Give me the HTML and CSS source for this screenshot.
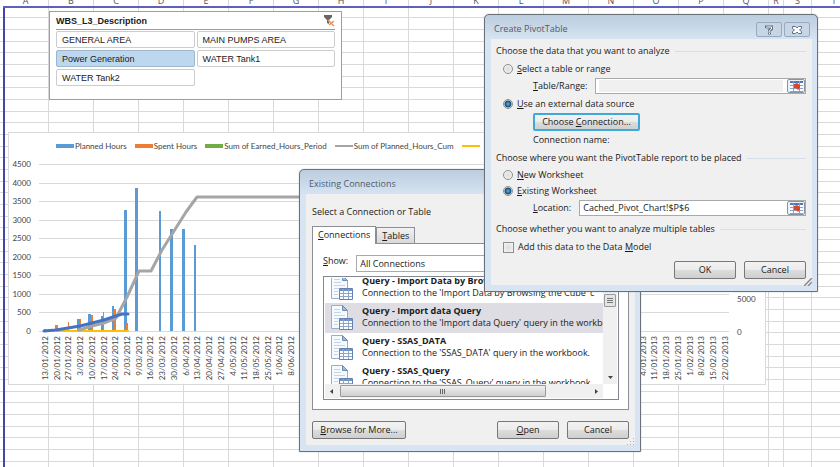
FILE: index.html
```html
<!DOCTYPE html>
<html lang="en">
<head>
    <meta charset="UTF-8">
    <meta name="viewport" content="width=device-width, initial-scale=1">
    <title>Create PivotTable</title>
    <link rel="stylesheet" href="styles.css">
</head>
<body>

    <svg class="symbols" aria-hidden="true">
        <symbol id="icon-query" viewBox="0 0 23 26">
            <path d="M1.500 .5h11l5 5v18h-16z" fill="#f6f9fd" stroke="#9aaec8"/>
            <path d="M12.500 .5v5h5z" fill="#9dbade" stroke="#6f8db5"/>
            <path d="M4 4.500h6M4 7.500h7M4 10.500h11M4 13.500h5M4 16.500h4M4 19.500h4" stroke="#c3d3e8"/>
            <path d="M9.500 13.500h13v11h-13z" fill="#fff" stroke="#6482ad"/>
            <path d="M10 14h12v2h-12z" fill="#6d93c8"/>
            <path d="M10 18.500h12M10 21.500h12M13.500 14v10M18.500 14v10" stroke="#8aa6cc"/>
        </symbol>
        <symbol id="icon-range" viewBox="0 0 13 11">
            <path d="M0 0h13v11h-13z" fill="#fff"/>
            <path d="M0 0h13v2h-13z" fill="#4f78b4"/>
            <path d="M0 4.500h13M0 7.500h13M0 10.500h13M3.500 0v11M9.500 0v11" stroke="#7fa3d3"/>
            <path d="M4 3l3-1 3 2v3l-2 2-2-2h-2z" fill="#d9472b"/>
        </symbol>
    </svg>

    <main class="sheet">
        <div class="col">A</div>
        <div class="col">B</div>
        <div class="col">C</div>
        <div class="col">D</div>
        <div class="col">E</div>
        <div class="col">F</div>
        <div class="col">G</div>
        <div class="col">H</div>
        <div class="col">I</div>
        <div class="col">J</div>
        <div class="col">K</div>
        <div class="col">L</div>
        <div class="col">M</div>
        <div class="col">N</div>
        <div class="col">O</div>
        <div class="col">P</div>
        <div class="col">Q</div>
        <div class="col col-r">R</div>
        <div class="col col-s">S</div>
        <div class="col col-last">T</div>
    </main>

    <section class="slicer">
        <header class="slicer-head">
            <h2>WBS_L3_Description</h2>
            <button class="clear-filter" type="button" aria-label="Clear filter">
                <svg width="12" height="12" viewBox="0 0 12 12">
                    <path d="M1 0h8v2l-3 3v4l-2-1v-3l-3-3z" fill="#666"/>
                    <path d="M5 5l6 6M11 6l-5 4" stroke="#e8935a" stroke-width="1.500"/>
                </svg>
            </button>
        </header>
        <div class="slicer-items">
            <button type="button">GENERAL AREA</button>
            <button type="button">MAIN PUMPS AREA</button>
            <button type="button" class="selected">Power Generation</button>
            <button type="button">WATER Tank1</button>
            <button type="button">WATER Tank2</button>
        </div>
    </section>

    <section class="chart">
        <div class="legend">
            <span><i class="key key-planned"></i>Planned Hours</span>
            <span><i class="key key-spent"></i>Spent Hours</span>
            <span><i class="key key-earned"></i>Sum of Earned_Hours_Period</span>
            <span><i class="key key-cum"></i>Sum of Planned_Hours_Cum</span>
            <span><i class="key key-yellow"></i></span>
        </div>
        <svg class="plot" width="756" height="230" viewBox="9 154 756 230">
            <g id="grid" class="grid"></g>
            <g id="value-labels" text-anchor="end"></g>
            <g class="planned">
                <path d="M77 319h3v12h-3zM88 314h3v17h-3zM101 316h2v15h-2zM112 306h2v25h-2z"/>
                <path d="M124 210h3v121h-3zM135 188h3v143h-3zM159 211h2v120h-2zM170 229h3v102h-3zM182 229h3v102h-3zM194 245h2v86h-2z"/>
            </g>
            <path class="spent" d="M44 329h2v2h-2zM55 325h3v6h-3zM68 322h1v9h-1zM80 319h1v12h-1zM91 315h2v16h-2zM103 312h1v19h-1zM114 309h2v22h-2zM126 323h2v8h-2z"/>
            <polyline class="line yellow" points="57,331 128,331"/>
            <polyline class="line cum" points="79,330 92,326 104,323 116,318 127,297 139,271 151,271 162,250 174,231 186,212 197,197 729,197"/>
            <polyline class="line actual" points="44,331 56,330 68,328 80,326 92,323 104,320 116,316 122,314 128,314"/>
            <g id="date-labels" text-anchor="end"></g>
            <text x="737" y="302">5000</text>
            <text x="737" y="335">0</text>
        </svg>
    </section>

    <section class="dialog connections" aria-label="Existing Connections">
        <header class="titlebar"><h2>Existing Connections</h2></header>
        <form class="dialog-body">
            <p class="prompt">Select a Connection or Table</p>
            <div class="tabs">
                <button type="button" class="tab active"><u>C</u>onnections</button>
                <button type="button" class="tab"><u>T</u>ables</button>
            </div>
            <div class="panel">
                <div class="show-row">
                    <label for="show"><u>S</u>how:</label>
                    <select id="show"><option>All Connections</option></select>
                </div>
                <div class="listbox">
                    <ul class="queries">
                        <li>
                            <svg><use href="#icon-query"/></svg>
                            <div><b>Query - Import Data by Browsing</b><span>Connection to the 'Import Data by Browsing the Cube' c</span></div>
                        </li>
                        <li class="selected">
                            <svg><use href="#icon-query"/></svg>
                            <div><b>Query - Import data Query</b><span>Connection to the 'Import data Query' query in the workbook.</span></div>
                        </li>
                        <li>
                            <svg><use href="#icon-query"/></svg>
                            <div><b>Query - SSAS_DATA</b><span>Connection to the 'SSAS_DATA' query in the workbook.</span></div>
                        </li>
                        <li>
                            <svg><use href="#icon-query"/></svg>
                            <div><b>Query - SSAS_Query</b><span>Connection to the 'SSAS_Query' query in the workbook.</span></div>
                        </li>
                    </ul>
                    <div class="vbar">
                        <div class="vthumb"></div>
                        <svg width="5" height="3" viewBox="0 0 5 3"><path d="M0 0h5l-2.500 3z"/></svg>
                    </div>
                    <div class="hbar">
                        <svg width="3" height="5" viewBox="0 0 3 5"><path d="M3 0v5l-3-2.500z"/></svg>
                        <div class="hthumb"></div>
                        <svg width="3" height="5" viewBox="0 0 3 5"><path d="M0 0v5l3-2.500z"/></svg>
                    </div>
                </div>
            </div>
            <div class="actions">
                <button type="button" class="btn browse"><u>B</u>rowse for More...</button>
                <button type="button" class="btn"><u>O</u>pen</button>
                <button type="button" class="btn">Cancel</button>
            </div>
        </form>
        <svg class="grip" width="8" height="8" viewBox="0 0 8 8"><path d="M6 0h1v1h-1zM6 3h1v1h-1zM6 6h1v1h-1zM3 3h1v1h-1zM3 6h1v1h-1zM0 6h1v1h-1z" fill="#b0b0b0"/></svg>
    </section>

    <section class="dialog pivot" aria-label="Create PivotTable">
        <header class="titlebar">
            <h2>Create PivotTable</h2>
            <button type="button" class="caption" aria-label="Help">
                <svg width="8" height="10" viewBox="0 0 8 10"><path d="M1 3v-1h5.500v2l-2 1.500v1M4.500 7.500v2" fill="none" stroke="#66717f" stroke-width="3"/><path d="M1.500 2.500v-.5h5v2l-2 1.500v1M4.500 8v1" fill="none" stroke="#fff"/></svg>
            </button>
            <button type="button" class="caption" aria-label="Close">
                <svg width="10" height="8" viewBox="0 0 10 8"><path d="M.5 .5h3l1.500 1.500 1.500-1.500h3v2l-2 1.500 2 1.500v2h-3l-1.500-1.500-1.500 1.500h-3v-2l2-1.500-2-1.500z" fill="#fff" stroke="#66717f"/></svg>
            </button>
        </header>
        <form class="dialog-body">
            <fieldset>
                <legend>Choose the data that you want to analyze</legend>
                <label class="choice"><input type="radio" name="source"><span><u>S</u>elect a table or range</span></label>
                <div class="field indent">
                    <label for="range"><u>T</u>able/Range:</label>
                    <div class="ref disabled">
                        <input id="range" type="text" disabled>
                        <button type="button" aria-label="Pick table range"><svg width="13" height="11"><use href="#icon-range"/></svg></button>
                    </div>
                </div>
                <label class="choice"><input type="radio" name="source" checked><span><u>U</u>se an external data source</span></label>
                <div class="indent"><button type="button" class="btn choose">Choose <u>C</u>onnection...</button></div>
                <p class="indent conn-name">Connection name:</p>
            </fieldset>
            <fieldset>
                <legend>Choose where you want the PivotTable report to be placed</legend>
                <label class="choice short"><input type="radio" name="target"><span><u>N</u>ew Worksheet</span></label>
                <label class="choice short"><input type="radio" name="target" checked><span><u>E</u>xisting Worksheet</span></label>
                <div class="field indent">
                    <label for="location"><u>L</u>ocation:</label>
                    <div class="ref">
                        <input id="location" type="text" value="Cached_Pivot_Chart!$P$6">
                        <button type="button" aria-label="Pick location"><svg width="13" height="11"><use href="#icon-range"/></svg></button>
                    </div>
                </div>
            </fieldset>
            <fieldset>
                <legend>Choose whether you want to analyze multiple tables</legend>
                <label class="choice"><input type="checkbox"><span>Add this data to the Data <u>M</u>odel</span></label>
            </fieldset>
            <div class="actions">
                <button type="button" class="btn">OK</button>
                <button type="button" class="btn">Cancel</button>
            </div>
        </form>
        <svg class="grip" width="8" height="8" viewBox="0 0 8 8"><path d="M0 8l8-8M4 8l4-4" stroke="#8a8a8a" stroke-width="1.500"/></svg>
    </section>

    <script>
        const svgNS = 'http://www.w3.org/2000/svg';
        const add = (parent, tag, attrs, text) => {
            const el = document.createElementNS(svgNS, tag);
            for (const key in attrs) el.setAttribute(key, attrs[key]);
            if (text !== undefined) el.textContent = text;
            document.getElementById(parent).appendChild(el);
        };

        // value axis, 0 - 4500
        for (let v = 0; v <= 4500; v += 500) {
            const y = Math.round(331 - v * 167 / 4500);
            add('grid', 'path', {d: `M39 ${y + 0.5}H729`});
            add('value-labels', 'text', {x: 31, y: y + 3}, v);
        }

        // one label a week
        for (let i = 0; i < 59; i++) {
            const d = new Date(2012, 0, 13 + i * 7);
            const label = `${d.getDate()}/${String(d.getMonth() + 1).padStart(2, '0')}/${d.getFullYear()}`;
            const x = Math.round(48 + i * 11.72);
            add('date-labels', 'text', {transform: `translate(${x} 336) rotate(-90)`}, label);
        }
    </script>
</body>
</html>
```
FILE: styles.css
```css
* {
    box-sizing: border-box;
}
body {
    margin: 0;
    min-height: 100vh;
    position: relative;
    overflow: hidden;
    background: #fff;
    color: #1a1a1a;
    font: 9px/12px "Open Sans", "Noto Sans", sans-serif;
}
h2, p, ul, fieldset, legend {
    margin: 0;
    padding: 0;
    border: 0;
}
button, input, select {
    font: inherit;
    color: inherit;
    margin: 0;
    padding: 0;
}
.symbols {
    position: absolute;
    width: 0;
    height: 0;
}

/* worksheet */
.sheet {
    display: flex;
    height: 100vh;
    padding-left: 3px;
    overflow: hidden;
    background: repeating-linear-gradient(#d9d9d9 0 1px, transparent 1px 12px, #d9d9d9 12px 13px, transparent 13px 24px, #d9d9d9 24px 25px, transparent 25px 35px) 0 17px no-repeat;
}
.col {
    flex: 0 0 45px;
    border-right: 1px solid #d9d9d9;
    color: #555;
    text-align: center;
    line-height: 6px;
    height: 100%;
}
.col::before {
    content: "";
    display: block;
    height: 2px;
    margin-top: -4px;
}
.col::after {
    content: "";
    display: block;
    margin: 2px -1px 0 0;
    height: 2px;
    background: #5f60bd;
}
.col:first-child {
    flex-basis: 46px;
    background: linear-gradient(#4646a8, #4646a8) 0 6px / 2px 100% no-repeat;
}
.col-r {
    flex-basis: 15px;
}
.col-s {
    flex-basis: 28px;
}
.col-last {
    flex: 1 0 45px;
}

/* slicer */
.slicer {
    position: absolute;
    left: 49px;
    top: 11px;
    width: 293px;
    padding: 0 6px 13px 6px;
    border: 1px solid #6fa8dc;
    background: #fff;
    font: 9px/12px "Liberation Sans", sans-serif;
}
.slicer-head {
    display: flex;
    justify-content: space-between;
    align-items: center;
    height: 18px;
    border-bottom: 1px solid #6fa8dc;
}
.slicer-head h2 {
    font-size: 9px;
}
.clear-filter {
    border: 0;
    background: none;
    height: 12px;
    line-height: 0;
}
.slicer-items {
    display: grid;
    grid-template-columns: 1fr 1fr;
    gap: 2px;
    margin-top: 1px;
}
.slicer-items button {
    height: 17px;
    padding: 0 5px;
    text-align: left;
    background: #fff;
    border: 1px solid #ccc;
    border-radius: 2px;
}
.slicer-items .selected {
    background: #bdd7ee;
    border-color: #9eb6ca;
}

/* chart */
.chart {
    position: absolute;
    left: 8px;
    top: 132px;
    width: 758px;
    border: 1px solid #d9d9d9;
    background: #fff;
    color: #444;
    font-family: Lato, sans-serif;
    font-size: 8px;
}
.legend {
    display: flex;
    gap: 8px;
    padding: 7px 0 2px 47px;
}
.legend span {
    display: flex;
    align-items: center;
    gap: 1px;
}
.key {
    width: 18px;
    height: 4px;
}
.key-planned {
    background: #5b9bd5;
}
.key-spent {
    background: #ed7d31;
}
.key-earned {
    background: #70ad47;
}
.key-cum {
    height: 2px;
    background: #a5a5a5;
}
.key-yellow {
    height: 2px;
    background: #ffc000;
}
.plot {
    display: block;
}
.plot text {
    fill: #444;
}
.grid {
    stroke: #d9d9d9;
}
.planned {
    fill: #5b9bd5;
}
.spent {
    fill: #ed7d31;
}
.line {
    fill: none;
    stroke-width: 2;
    stroke-linejoin: round;
    stroke-linecap: round;
}
.line.yellow {
    stroke: #ffc000;
}
.line.cum {
    stroke: #a5a5a5;
    stroke-width: 3;
}
.line.actual {
    stroke: #4472c4;
    stroke-width: 3;
}

/* dialogs */
.dialog {
    position: absolute;
    padding: 0 5px 6px 6px;
    border: 1px solid #6b7178;
    border-radius: 5px 5px 0 0;
    background: linear-gradient(#bccddf, #d7e4f2 25px);
    box-shadow: 0 0 1px #777;
}
.dialog-body {
    background: #f0f0f0;
}
.titlebar {
    display: flex;
    gap: 2px;
    height: 24px;
    padding: 0 2px 0 3px;
    color: #4d5a6b;
}
.titlebar h2 {
    flex: 1;
    align-self: center;
    padding-top: 4px;
    font-size: 9px;
    font-weight: normal;
}
.caption {
    display: flex;
    align-items: center;
    justify-content: center;
    width: 26px;
    height: 15px;
    margin-top: 7px;
    background: #c6d6e7;
    border: 1px solid #9aa9bc;
    border-radius: 2px;
}
.btn {
    width: 62px;
    height: 18px;
    border: 1px solid #777;
    border-radius: 2px;
    background: linear-gradient(#f3f3f3, #ebebeb 50%, #ddd 50%, #cfcfcf);
}
.actions {
    display: flex;
    justify-content: flex-end;
    gap: 8px;
}

/* existing connections */
.connections {
    left: 299px;
    top: 169px;
    width: 342px;
}
.connections .dialog-body {
    padding: 12px 6px 6px;
}
.tabs {
    display: flex;
    align-items: flex-end;
    margin-top: 8px;
}
.tab {
    height: 16px;
    padding: 0 5px;
    border: 1px solid #8c8f96;
    border-bottom: 0;
    background: linear-gradient(#f2f2f2, #d8d8d8);
}
.tab.active {
    height: 18px;
    margin-bottom: -1px;
    padding-bottom: 1px;
    position: relative;
    background: #fff;
}
.panel {
    padding: 11px 9px 9px 10px;
    border: 1px solid #8c8f96;
    background: #fff;
}
.show-row {
    display: flex;
    gap: 8px;
}
.show-row select {
    flex: 1;
    height: 17px;
    padding-left: 3px;
    appearance: none;
    border: 1px solid #aaa;
    border-radius: 0;
    background: #fff;
}
.listbox {
    display: grid;
    grid-template-columns: 1fr 14px;
    margin-top: 4px;
    padding: 1px;
    border: 1px solid #828790;
}
.queries {
    display: flex;
    flex-direction: column;
    justify-content: flex-end;
    height: 106px;
    overflow: hidden;
    list-style: none;
}
.queries li {
    display: flex;
    flex: none;
    gap: 9px;
    height: 30px;
    padding: 2px 0 0 5px;
}
.queries li:last-child {
    height: 21px;
}
.queries .selected {
    background: #dedde3;
}
.queries svg {
    flex: none;
    width: 23px;
    height: 26px;
}
.queries div {
    white-space: nowrap;
}
.queries b, .queries span {
    display: block;
    font-size: 9px;
}
.vbar {
    display: flex;
    flex-direction: column;
    justify-content: space-between;
    align-items: center;
    padding: 16px 0 5px;
    background: #f0f0f0;
}
.vbar svg, .hbar svg {
    fill: #444;
}
.vthumb {
    width: 12px;
    height: 13px;
    border: 1px solid #999;
    border-radius: 1px;
    background: repeating-linear-gradient(#777 0 1px, transparent 1px 2px) center / 6px 5px no-repeat, #e4e4e4;
}
.hbar {
    display: flex;
    align-items: center;
    gap: 7px;
    height: 14px;
    padding: 0 5px;
    background: #f0f0f0;
}
.hthumb {
    width: 206px;
    height: 12px;
    margin-right: auto;
    border: 1px solid #999;
    border-radius: 1px;
    background: repeating-linear-gradient(90deg, #666 0 1px, transparent 1px 2px) center / 6px 5px no-repeat, linear-gradient(#f0f0f0, #cfcfcf);
}
.connections .actions {
    margin-top: 11px;
}
.browse {
    width: 94px;
    margin-right: auto;
}

/* create pivottable */
.pivot {
    left: 484px;
    top: 14px;
    width: 334px;
}
.pivot .dialog-body {
    padding: 6px 6px 6px 5px;
}
.pivot legend {
    display: flex;
    align-items: center;
    gap: 5px;
    width: 100%;
    margin-bottom: 3px;
}
.pivot legend::after {
    content: "";
    flex: 1;
    height: 1px;
    background: #d3e0ec;
}
.choice {
    display: flex;
    align-items: center;
    gap: 4px;
    height: 18px;
    padding-left: 7px;
}
.choice.short {
    height: 16px;
}
.choice input {
    appearance: none;
    width: 11px;
    height: 11px;
    border: 1px solid #8e8f8f;
    background: radial-gradient(#ddd, #f6f6f6);
}
.choice input[type=radio] {
    width: 10px;
    height: 10px;
    border-radius: 50%;
}
.choice input[type=radio]:checked {
    background: radial-gradient(circle, #58b6e8 0, #1c4a74 3px, #f4f4f4 4px);
}
.indent {
    margin-left: 37px;
}
.field {
    display: flex;
    align-items: center;
    gap: 8px;
}
.ref {
    display: flex;
    flex: 1;
    height: 16px;
    border: 1px solid #aaa;
    background: #fff;
}
.ref input {
    flex: 1;
    min-width: 0;
    margin: 1px 4px 1px 3px;
    border: 0;
    background: none;
}
.ref.disabled input {
    background: #f0f0f0;
}
.ref button {
    display: flex;
    align-items: center;
    justify-content: center;
    width: 18px;
    height: 14px;
    border: 1px solid #8a93a3;
    border-radius: 2px;
    background: #eef2f7;
}
.choose {
    display: block;
    width: 107px;
    height: 18px;
    border: 2px solid #3fa9d8;
}
.conn-name {
    padding: 3px 0 6px;
}
.pivot .field {
    margin-bottom: 1px;
}
.pivot fieldset:nth-child(2) .field {
    margin-top: 1px;
    margin-bottom: 7px;
}
.pivot .actions {
    margin-top: 5px;
}
.grip {
    position: absolute;
    right: 5px;
    bottom: 5px;
}
```
